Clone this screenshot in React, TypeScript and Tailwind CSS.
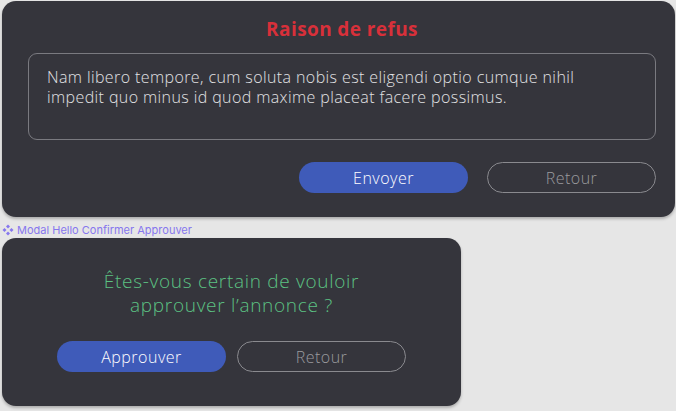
export default function App() {
  const font = { fontFamily: '"Open Sans", "Noto Sans", sans-serif' };
  return (
    <div className="w-[676px] h-[411px] bg-[#e6e6e6] overflow-hidden pt-[1px] pl-[2px]" style={font}>
      {/* Raison de refus */}
      <div className="w-[673px] h-[216px] rounded-[14px] bg-[#35353c] shadow-[0_2px_3px_rgba(0,0,0,0.25)] pl-[26px] pr-[19px] pt-[16px] flex flex-col">
        <h2 className="text-center text-[19px] leading-[24px] font-bold tracking-[0.4px] text-[#d8303a]">Raison de refus</h2>
        <div className="mt-[12px] h-[87px] rounded-[9px] border border-[#7a7a80] px-[18px] pt-[13px] text-[16px] leading-[20px] font-light tracking-[0.4px] text-[#e2e2e4]">
          Nam libero tempore, cum soluta nobis est eligendi optio cumque nihil
          <br />
          impedit quo minus id quod maxime placeat facere possimus.
        </div>
        <div className="mt-[22px] flex justify-end gap-[19px]">
          <button className="w-[169px] h-[31px] rounded-full bg-[#3f5bb9] text-[16px] font-light tracking-[0.5px] text-white">Envoyer</button>
          <button className="w-[169px] h-[31px] rounded-full border border-[#8a8a8f] text-[16px] font-light tracking-[0.5px] text-[#9a9a9e]">Retour</button>
        </div>
      </div>

      {/* label */}
      <div className="mt-[6px] h-[14px] flex items-center gap-[3px] text-[11px] text-[#8677ee]" style={{ fontFamily: 'Inter, sans-serif' }}>
        <svg width="12" height="12" viewBox="0 0 12 12" fill="currentColor">
          <path d="M6 0.5 8 2.5 6 4.5 4 2.5Z" />
          <path d="M6 7.5 8 9.5 6 11.5 4 9.5Z" />
          <path d="M2.5 4 4.5 6 2.5 8 0.5 6Z" />
          <path d="M9.5 4 11.5 6 9.5 8 7.5 6Z" />
        </svg>
        <span>Modal Hello Confirmer Approuver</span>
      </div>

      {/* Confirmer */}
      <div className="mt-[1px] w-[459px] h-[168px] rounded-[14px] bg-[#35353c] shadow-[0_2px_3px_rgba(0,0,0,0.25)] pt-[31px] flex flex-col items-center">
        <p className="text-center text-[19px] leading-[24px] tracking-[0.7px] text-[#5cc283]" style={{ fontWeight: 350 }}>
          Êtes-vous certain de vouloir
          <br />
          approuver l’annonce ?
        </p>
        <div className="mt-[24px] flex gap-[11px]">
          <button className="w-[169px] h-[31px] rounded-full bg-[#3f5bb9] text-[16px] font-light tracking-[0.5px] text-white">Approuver</button>
          <button className="w-[169px] h-[31px] rounded-full border border-[#8a8a8f] text-[16px] font-light tracking-[0.5px] text-[#9a9a9e]">Retour</button>
        </div>
      </div>
    </div>
  );
}
